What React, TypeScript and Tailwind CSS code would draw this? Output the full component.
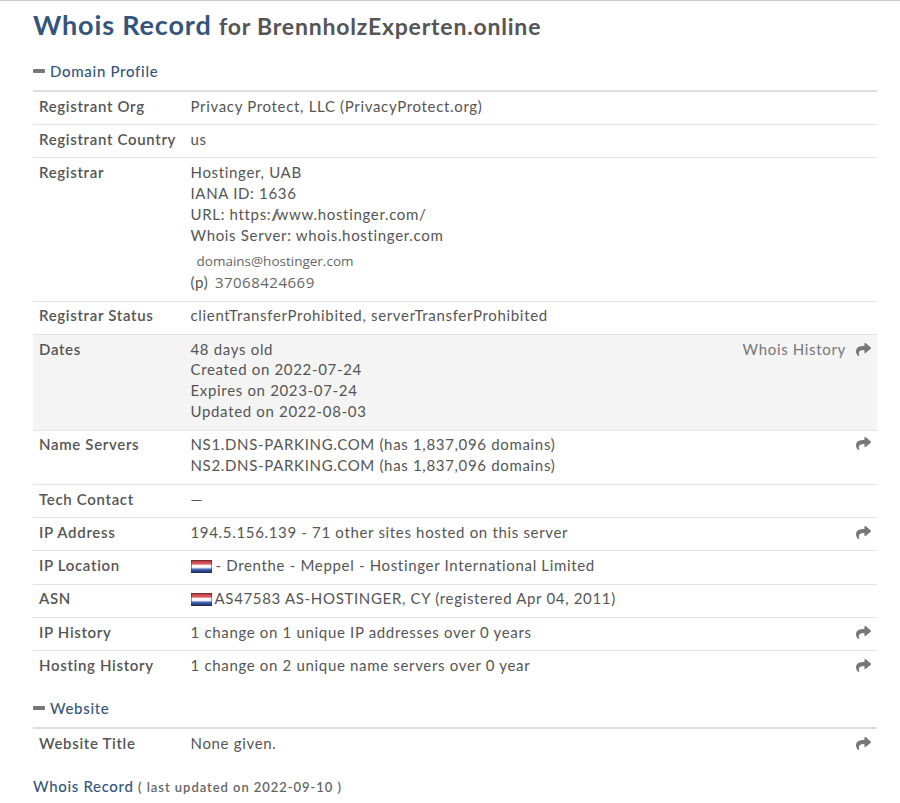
import type { ReactNode } from "react";
import { FaShare } from "react-icons/fa";

function Flag() {
  return (
    <svg width="21" height="13" viewBox="0 0 21 13" className="mr-[3px] inline-block align-[-2px]">
      <defs>
        <linearGradient id="nl" x1="0" y1="0" x2="0" y2="1">
          <stop offset="0" stopColor="#b5303a" />
          <stop offset="0.3" stopColor="#e0666c" />
          <stop offset="0.42" stopColor="#ffffff" />
          <stop offset="0.6" stopColor="#eeeef4" />
          <stop offset="0.72" stopColor="#4a6cc0" />
          <stop offset="1" stopColor="#14296b" />
        </linearGradient>
      </defs>
      <rect x="0" y="0" width="21" height="13" fill="#333333" />
      <rect x="0.5" y="0.5" width="20" height="12" fill="url(#nl)" />
    </svg>
  );
}

function SectionTitle({ children }: { children: ReactNode }) {
  return (
    <div className="flex h-[37px] items-start border-b-2 border-[#dddddd] pt-[7px]">
      <span className="mt-[7px] mr-[5px] h-[4px] w-[12px] rounded-[1px] bg-[#777777]" />
      <span className="text-[15px] leading-[18px] font-medium tracking-[0.7px] text-[#34557c]">{children}</span>
    </div>
  );
}

function Row({
  label,
  children,
  height,
  arrow,
  shaded,
  noBorder,
  tight,
}: {
  label: string;
  children: ReactNode;
  height: string;
  arrow?: boolean;
  shaded?: boolean;
  noBorder?: boolean;
  tight?: boolean;
}) {
  return (
    <div
      className={`relative flex pl-[6px] ${tight ? "pt-[3px]" : "pt-[4px]"} ${height} ${
        noBorder ? "" : "border-b border-[#e2e2e2]"
      } ${shaded ? "bg-[#f4f4f4]" : ""}`}
    >
      <div className="w-[151.5px] shrink-0 leading-[21px] font-semibold text-[#555555]">{label}</div>
      <div className="flex-1 leading-[21px]">{children}</div>
      {arrow && (
        <FaShare
          className={`absolute right-[6px] h-[15px] w-[15px] text-[#777777] ${tight ? "top-[5px]" : "top-[7px]"}`}
        />
      )}
    </div>
  );
}

export default function App() {
  return (
    <div className="min-h-[803px] w-[900px] overflow-hidden border-t border-[#cccccc] bg-white pr-[23px] pl-[33px] font-['Lato',sans-serif] text-[15px] tracking-[0.67px] text-[#555555]">
      <h1 className="h-[54px] pt-[6px] text-[27px] leading-[36px] font-bold tracking-[0.85px] text-[#34557c]">
        Whois Record{" "}
        <span className="text-[23px] tracking-[0.8px] text-[#555555]">for BrennholzExperten.online</span>
      </h1>

      <SectionTitle>Domain Profile</SectionTitle>
      <Row label="Registrant Org" height="h-[33px]">
        Privacy Protect, LLC (PrivacyProtect.org)
      </Row>
      <Row label="Registrant Country" height="h-[33px]">
        us
      </Row>
      <Row label="Registrar" height="h-[144px]">
        <div>Hostinger, UAB</div>
        <div>IANA ID: 1636</div>
        <div>
          URL: https:<span className="tracking-[-2.5px]">//</span>
          www.hostinger.com/
        </div>
        <div>Whois Server: whois.hostinger.com</div>
        <div className="mt-[5px] pl-[6px] font-['Open_Sans',sans-serif] text-[13.5px] tracking-normal text-[#666666]">
          domains@hostinger.com
        </div>
        <div>
          (p){" "}
          <span className="ml-[2px] font-['Open_Sans',sans-serif] text-[15px] tracking-[0.5px] text-[#666666]">
            37068424669
          </span>
        </div>
      </Row>
      <Row label="Registrar Status" height="h-[33px]" tight>
        clientTransferProhibited, serverTransferProhibited
      </Row>
      <Row label="Dates" height="h-[96px]" shaded>
        <div className="flex justify-between pr-[6px]">
          <span>48 days old</span>
          <span className="flex items-center text-[#777777]">
            Whois History
            <FaShare className="ml-[10px] h-[15px] w-[15px]" />
          </span>
        </div>
        <div className="-mt-[1px]">Created on 2022-07-24</div>
        <div>Expires on 2023-07-24</div>
        <div>Updated on 2022-08-03</div>
      </Row>
      <Row label="Name Servers" height="h-[54px]" arrow tight>
        <div>NS1.DNS-PARKING.COM (has 1,837,096 domains)</div>
        <div>NS2.DNS-PARKING.COM (has 1,837,096 domains)</div>
      </Row>
      <Row label="Tech Contact" height="h-[33px]">
        —
      </Row>
      <Row label="IP Address" height="h-[33px]" arrow>
        194.5.156.139 - 71 other sites hosted on this server
      </Row>
      <Row label="IP Location" height="h-[34px]">
        <Flag />
        <span className="ml-[1px]">- Drenthe - Meppel - Hostinger International Limited</span>
      </Row>
      <Row label="ASN" height="h-[33px]" tight>
        <Flag />AS47583 AS-HOSTINGER, CY (registered Apr 04, 2011)
      </Row>
      <Row label="IP History" height="h-[33px]" arrow>
        1 change on 1 unique IP addresses over 0 years
      </Row>
      <Row label="Hosting History" height="h-[33px]" arrow noBorder>
        1 change on 2 unique name servers over 0 year
      </Row>

      <div className="mt-[8px]">
        <SectionTitle>Website</SectionTitle>
      </div>
      <Row label="Website Title" height="h-[33px]" arrow noBorder>
        None given.
      </Row>

      <div className="mt-[14px] leading-[20px]">
        <span className="text-[15px] font-medium text-[#34557c]">Whois Record</span>{" "}
        <span className="text-[13px] font-semibold tracking-[0.95px] text-[#666666]">( last updated on 2022-09-10 )</span>
      </div>
    </div>
  );
}
